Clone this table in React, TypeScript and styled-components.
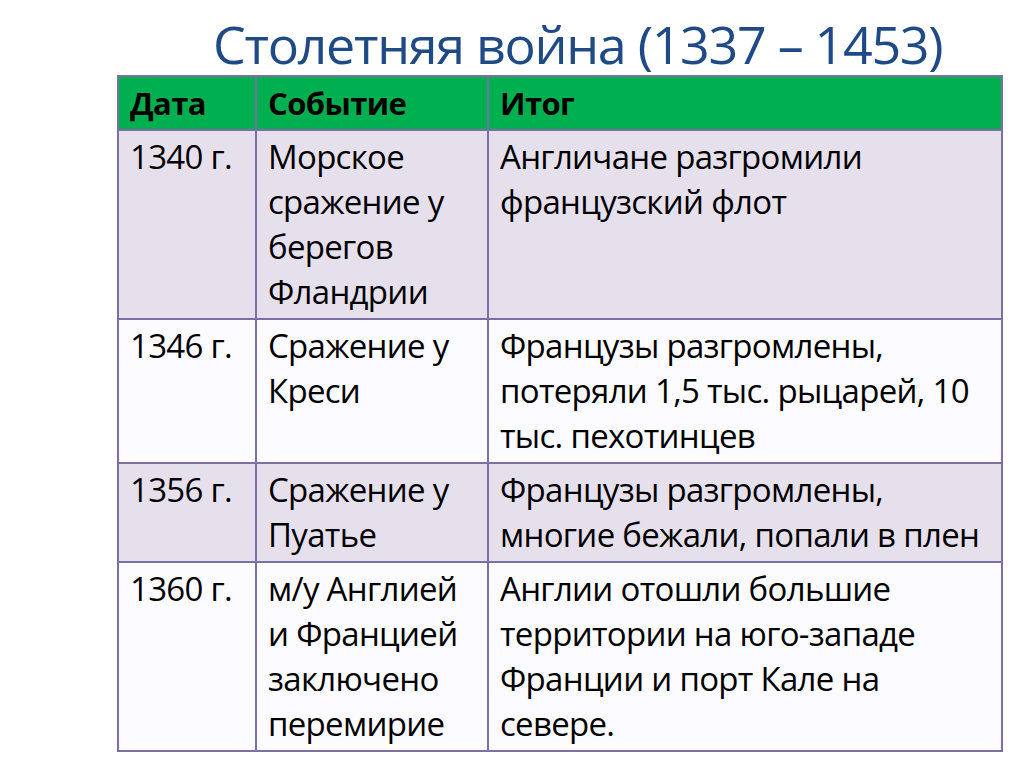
import React from "react";
import styled, { createGlobalStyle } from "styled-components";

const GlobalStyle = createGlobalStyle`
  html, body { margin: 0; padding: 0; background: #ffffff; }
  body { font-family: "Open Sans", "Noto Sans", sans-serif; }
`;

const Slide = styled.div`
  width: 1024px;
  height: 767px;
  background: #ffffff;
  display: flex;
  flex-direction: column;
  overflow: hidden;
`;

const Title = styled.h1`
  margin: 0;
  height: 75px;
  padding-left: 213px;
  font-family: "Open Sans", "Noto Sans", sans-serif;
  font-weight: 400;
  font-size: 52px;
  line-height: 88px;
  letter-spacing: -1.3px;
  color: #1f4a85;
  white-space: nowrap;
  box-sizing: border-box;
`;

const Table = styled.table`
  margin-left: 117px;
  width: 884px;
  border-collapse: collapse;
  table-layout: fixed;
  font-family: "Open Sans", "Noto Sans", sans-serif;
  color: #000000;
`;

const Col = styled.col<{ $w: number }>`
  width: ${(p) => p.$w}px;
`;

const HeadRow = styled.tr`
  background: #00b050;
  height: 54px;
`;

const HeadCell = styled.th`
  box-sizing: border-box;
  border: 2px solid #7c6fa6;
  padding: 0 0 0 11px;
  text-align: left;
  vertical-align: middle;
  font-size: 31px;
  font-weight: 700;
  letter-spacing: -0.6px;
  white-space: nowrap;
`;

const BodyRow = styled.tr<{ $shade: boolean }>`
  background: ${(p) => (p.$shade ? "#e6e0ed" : "#fcfbff")};
`;

const Cell = styled.td`
  box-sizing: border-box;
  border: 2px solid #7c6fa6;
  padding: 3px 0 4px 11px;
  vertical-align: top;
  font-size: 33px;
  line-height: 45px;
  letter-spacing: -0.7px;
`;

const Line = styled.span`
  display: block;
  white-space: nowrap;
`;

const rows: { date: string; event: string[]; result: string[] }[] = [
  {
    date: "1340 г.",
    event: ["Морское", "сражение у", "берегов", "Фландрии"],
    result: ["Англичане разгромили", "французский флот"],
  },
  {
    date: "1346 г.",
    event: ["Сражение у", "Креси"],
    result: [
      "Французы разгромлены,",
      "потеряли 1,5 тыс. рыцарей, 10",
      "тыс. пехотинцев",
    ],
  },
  {
    date: "1356 г.",
    event: ["Сражение у", "Пуатье"],
    result: ["Французы разгромлены,", "многие бежали, попали в плен"],
  },
  {
    date: "1360 г.",
    event: ["м/у Англией", "и Францией", "заключено", "перемирие"],
    result: [
      "Англии отошли большие",
      "территории на юго-западе",
      "Франции и порт Кале на",
      "севере.",
    ],
  },
];

export default function App() {
  return (
    <>
      <GlobalStyle />
      <Slide>
        <Title>Столетняя война (1337 – 1453)</Title>
        <Table>
          <colgroup>
            <Col $w={138} />
            <Col $w={232} />
            <Col $w={514} />
          </colgroup>
          <thead>
            <HeadRow>
              <HeadCell>Дата</HeadCell>
              <HeadCell>Событие</HeadCell>
              <HeadCell>Итог</HeadCell>
            </HeadRow>
          </thead>
          <tbody>
            {rows.map((r, i) => (
              <BodyRow key={r.date} $shade={i % 2 === 0}>
                <Cell>
                  <Line>{r.date}</Line>
                </Cell>
                <Cell>
                  {r.event.map((l) => (
                    <Line key={l}>{l}</Line>
                  ))}
                </Cell>
                <Cell>
                  {r.result.map((l) => (
                    <Line key={l}>{l}</Line>
                  ))}
                </Cell>
              </BodyRow>
            ))}
          </tbody>
        </Table>
      </Slide>
    </>
  );
}
